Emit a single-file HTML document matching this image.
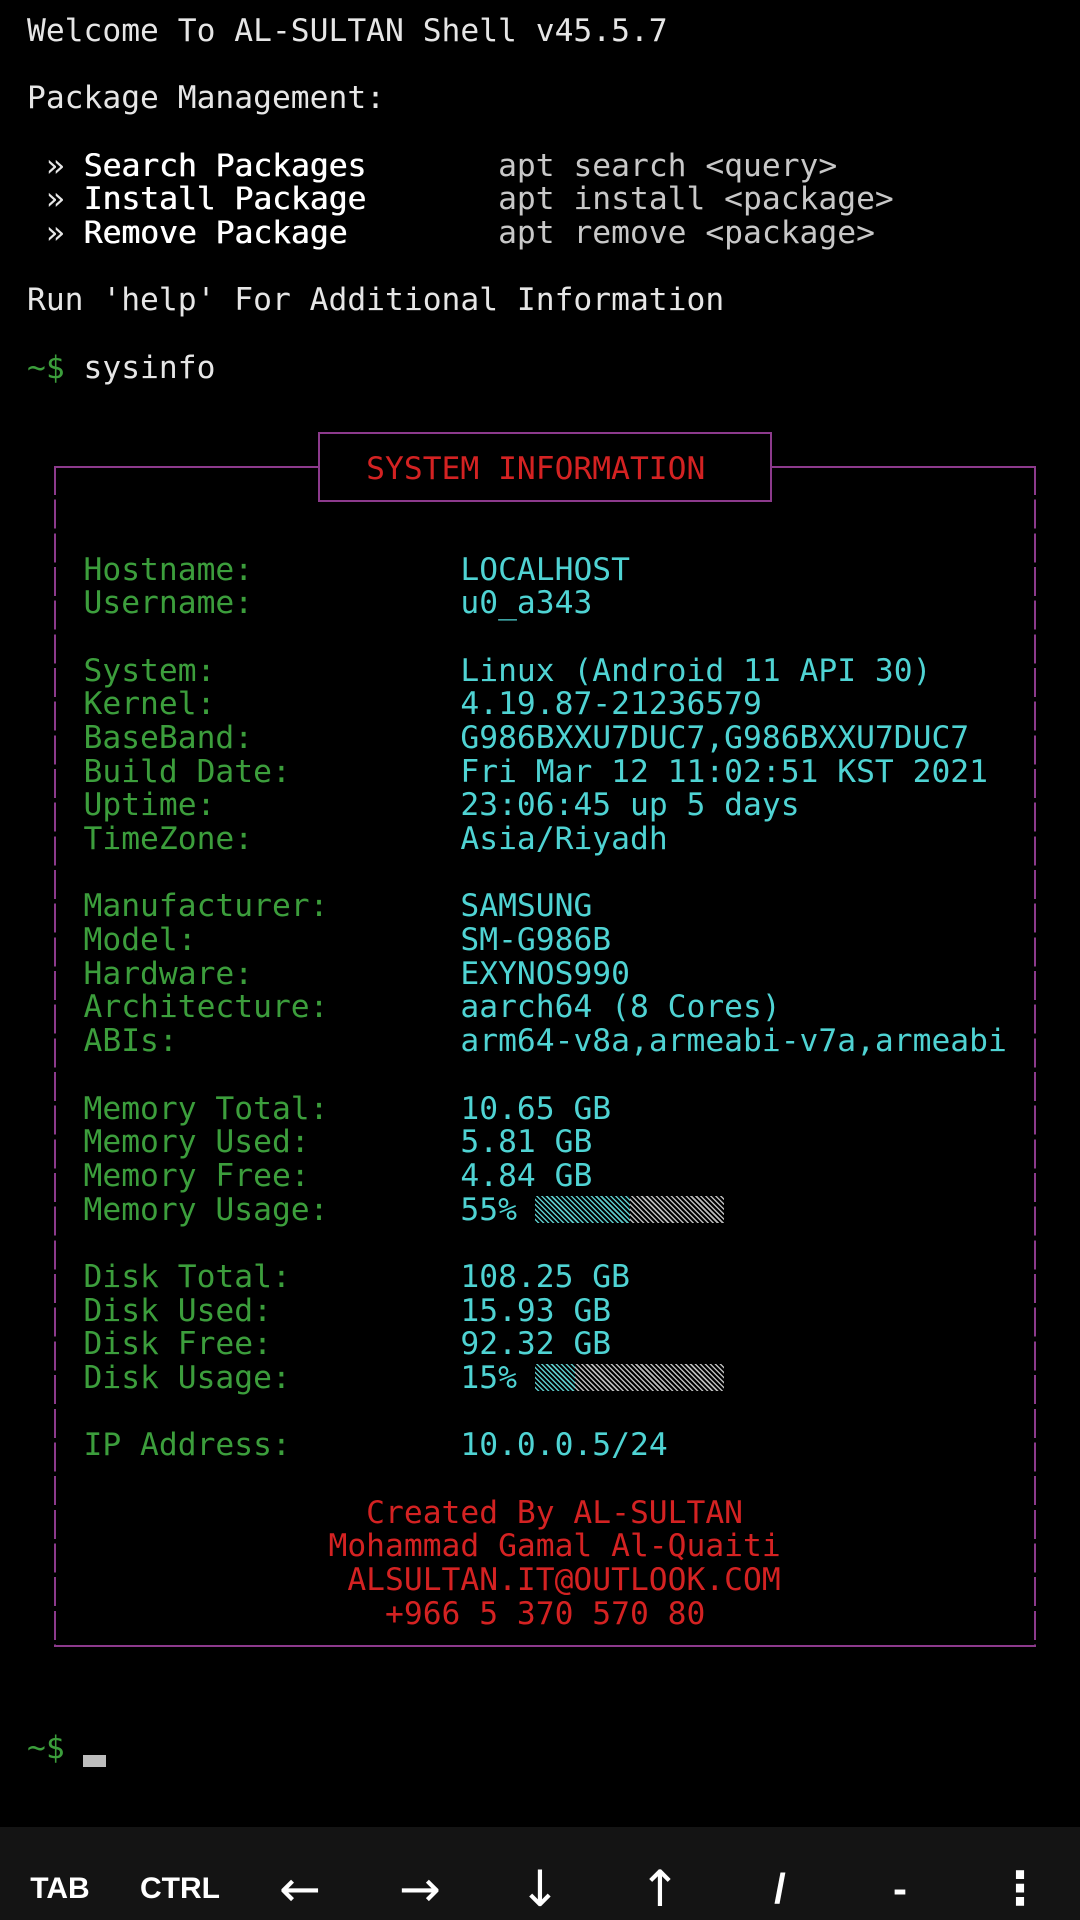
<!DOCTYPE html>
<html><head><meta charset="utf-8"><style>
html,body{margin:0;padding:0;background:#000;width:1080px;height:1920px;overflow:hidden;position:relative}
pre{position:absolute;left:27px;top:15px;margin:0;font-family:"DejaVu Sans Mono","Liberation Mono",monospace;font-size:31.3px;line-height:33.67px;color:#e6e6e6;white-space:pre}
.b{color:#fff;text-shadow:0.6px 0 0 #fff}.g{color:#3c9e3c}.c{color:#4fd3d3}.r{color:#d42222}.a{color:#c8c8c8}
.h{position:absolute;background:#8c3a8c;height:2px}
.v{position:absolute;width:2px;background:repeating-linear-gradient(to bottom,#8c3a8c 0 29px,transparent 29px 33.67px)}
.bar{position:absolute;left:535px;width:189px;height:27px}
.bar div{position:absolute;top:0;bottom:0}
.bot{position:absolute;left:0;top:1827px;width:1080px;height:93px;background:#141414}
.bot div{position:absolute;top:62px;width:120px;height:0;color:#fff;font-family:"Liberation Sans","DejaVu Sans",sans-serif;font-weight:bold;font-size:30px}
.bot span{position:absolute;left:0;width:120px;text-align:center;top:-0.6em;line-height:1.2em}
.bot div.ar{font-family:"DejaVu Sans",sans-serif;font-size:50px;font-weight:normal}
</style></head><body>
<pre>Welcome To AL-SULTAN Shell v45.5.7

Package Management:

 » <span class="b">Search Packages</span>       <span class="a">apt search &lt;query&gt;</span>
 » <span class="b">Install Package</span>       <span class="a">apt install &lt;package&gt;</span>
 » <span class="b">Remove Package</span>        <span class="a">apt remove &lt;package&gt;</span>

Run 'help' For Additional Information

<span class="g">~$</span> sysinfo


                  <span class="r">SYSTEM INFORMATION</span>


   <span class="g">Hostname:</span>           <span class="c">LOCALHOST</span>
   <span class="g">Username:</span>           <span class="c">u0_a343</span>

   <span class="g">System:</span>             <span class="c">Linux (Android 11 API 30)</span>
   <span class="g">Kernel:</span>             <span class="c">4.19.87-21236579</span>
   <span class="g">BaseBand:</span>           <span class="c">G986BXXU7DUC7,G986BXXU7DUC7</span>
   <span class="g">Build Date:</span>         <span class="c">Fri Mar 12 11:02:51 KST 2021</span>
   <span class="g">Uptime:</span>             <span class="c">23:06:45 up 5 days</span>
   <span class="g">TimeZone:</span>           <span class="c">Asia/Riyadh</span>

   <span class="g">Manufacturer:</span>       <span class="c">SAMSUNG</span>
   <span class="g">Model:</span>              <span class="c">SM-G986B</span>
   <span class="g">Hardware:</span>           <span class="c">EXYNOS990</span>
   <span class="g">Architecture:</span>       <span class="c">aarch64 (8 Cores)</span>
   <span class="g">ABIs:</span>               <span class="c">arm64-v8a,armeabi-v7a,armeabi</span>

   <span class="g">Memory Total:</span>       <span class="c">10.65 GB</span>
   <span class="g">Memory Used:</span>        <span class="c">5.81 GB</span>
   <span class="g">Memory Free:</span>        <span class="c">4.84 GB</span>
   <span class="g">Memory Usage:</span>       <span class="c">55%</span>

   <span class="g">Disk Total:</span>         <span class="c">108.25 GB</span>
   <span class="g">Disk Used:</span>          <span class="c">15.93 GB</span>
   <span class="g">Disk Free:</span>          <span class="c">92.32 GB</span>
   <span class="g">Disk Usage:</span>         <span class="c">15%</span>

   <span class="g">IP Address:</span>         <span class="c">10.0.0.5/24</span>

                  <span class="r">Created By AL-SULTAN</span>
                <span class="r">Mohammad Gamal Al-Quaiti</span>
                 <span class="r">ALSULTAN.IT@OUTLOOK.COM</span>
                   <span class="r">+966 5 370 570 80</span>



<span class="g">~$</span></pre>
<div class="h" style="left:318px;top:432px;width:454px"></div>
<div class="h" style="left:318px;top:500px;width:454px"></div>
<div class="h" style="left:318px;top:432px;width:2px;height:70px"></div>
<div class="h" style="left:770px;top:432px;width:2px;height:70px"></div>
<div class="h" style="left:54px;top:466px;width:266px"></div>
<div class="h" style="left:770px;top:466px;width:266px"></div>
<div class="v" style="left:54px;top:466px;height:1180px"></div>
<div class="v" style="left:1034px;top:466px;height:1180px"></div>
<div class="h" style="left:54px;top:1645px;width:982px"></div>
<div class="bar" style="top:1196px">
<div style="left:0;width:95px;background:repeating-linear-gradient(45deg,transparent 0 2px,#5cc8c8 2px 3.5px)"></div>
<div style="left:95px;width:94px;background:repeating-linear-gradient(45deg,transparent 0 2px,#bbb 2px 3.5px)"></div>
</div>
<div class="bar" style="top:1364px">
<div style="left:0;width:40px;background:repeating-linear-gradient(45deg,transparent 0 2px,#5cc8c8 2px 3.5px)"></div>
<div style="left:40px;width:149px;background:repeating-linear-gradient(45deg,transparent 0 2px,#bbb 2px 3.5px)"></div>
</div>
<div style="position:absolute;left:83px;top:1755px;width:23px;height:12px;background:#bdbdbd"></div>
<div class="bot">
<div style="left:0"><span>TAB</span></div>
<div style="left:120px"><span>CTRL</span></div>
<div class="ar" style="left:240px"><span>←</span></div>
<div class="ar" style="left:360px"><span>→</span></div>
<div class="ar" style="left:480px"><span>↓</span></div>
<div class="ar" style="left:600px"><span>↑</span></div>
<div style="left:720px;font-size:42px"><span>/</span></div>
<div style="left:840px;font-size:42px"><span>-</span></div>
<div class="ar" style="left:960px;font-size:46px;font-weight:bold"><span>⋮</span></div>
</div>
</body></html>
